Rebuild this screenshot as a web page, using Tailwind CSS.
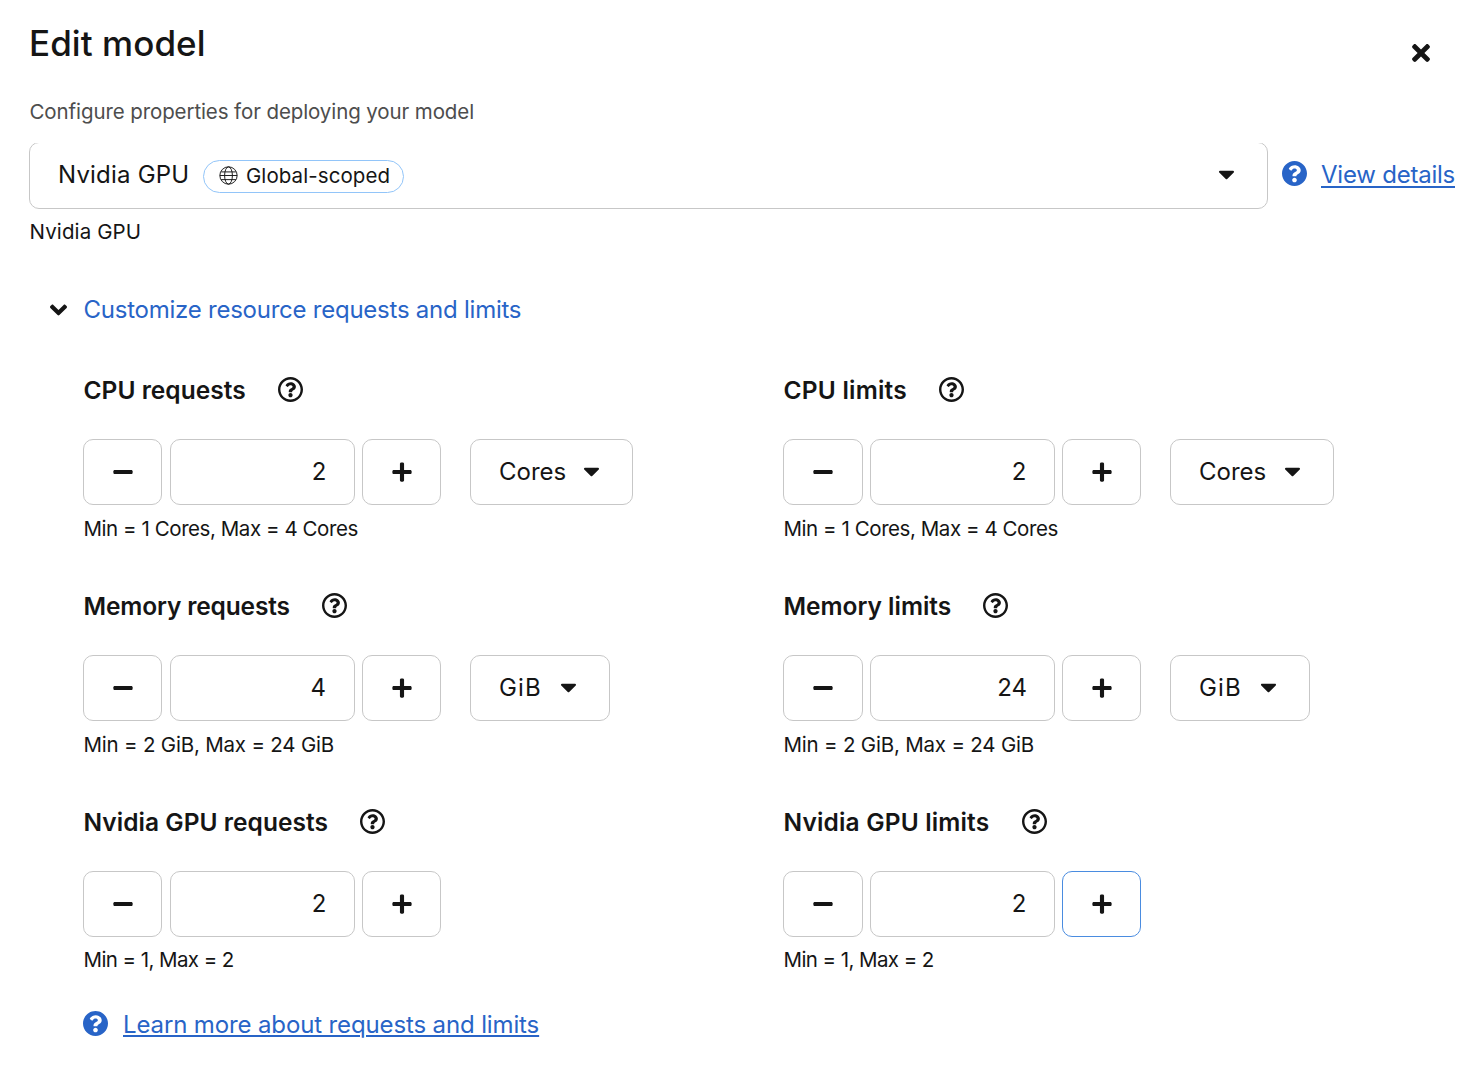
<!DOCTYPE html>
<html lang="en">
<head>
<meta charset="utf-8">
<title>Edit model</title>
<script src="https://cdn.jsdelivr.net/npm/@tailwindcss/browser@4"></script>
</head>
<body class="h-[1068px] w-[1470px] overflow-hidden bg-white font-['Inter',sans-serif] text-[24px] text-[#151515]">
<svg class="hidden" aria-hidden="true">
  <symbol id="times" viewBox="0 0 352 512"><path d="M242.72 256l100.07-100.07c12.28-12.28 12.28-32.19 0-44.48l-22.24-22.24c-12.28-12.28-32.19-12.28-44.48 0L176 189.28 75.93 89.21c-12.28-12.28-32.19-12.28-44.48 0L9.21 111.45c-12.28 12.28-12.28 32.19 0 44.48L109.28 256 9.21 356.07c-12.28 12.28-12.28 32.19 0 44.48l22.24 22.24c12.28 12.28 32.2 12.28 44.48 0L176 322.72l100.07 100.07c12.28 12.28 32.2 12.28 44.48 0l22.24-22.24c12.28-12.28 12.28-32.19 0-44.48L242.72 256z"/></symbol>
  <symbol id="angle" viewBox="0 0 320 512"><path d="M143 352.3L7 216.3c-9.4-9.4-9.4-24.6 0-33.9l22.6-22.6c9.4-9.4 24.6-9.4 33.9 0l96.4 96.4 96.4-96.4c9.4-9.4 24.6-9.4 33.9 0l22.6 22.6c9.4 9.4 9.4 24.6 0 33.9l-136 136c-9.2 9.4-24.4 9.4-33.8 0z"/></symbol>
  <symbol id="caret" viewBox="0 0 320 512"><path d="M31.3 192h257.3c17.8 0 26.7 21.5 14.1 34.1L174.1 354.8c-7.8 7.8-20.5 7.8-28.3 0L17.2 226.1C4.6 213.5 13.4 192 31.3 192z"/></symbol>
  <symbol id="minus" viewBox="0 0 448 512"><path d="M416 208H32c-17.67 0-32 14.33-32 32v32c0 17.67 14.33 32 32 32h384c17.67 0 32-14.33 32-32v-32c0-17.67-14.33-32-32-32z"/></symbol>
  <symbol id="plus" viewBox="0 0 448 512"><path d="M416 208H272V64c0-17.67-14.33-32-32-32h-32c-17.67 0-32 14.33-32 32v144H32c-17.67 0-32 14.33-32 32v32c0 17.67 14.33 32 32 32h144v144c0 17.67 14.33 32 32 32h32c17.67 0 32-14.33 32-32V304h144c17.67 0 32-14.33 32-32v-32c0-17.67-14.33-32-32-32z"/></symbol>
  <symbol id="help" viewBox="8 8 496 496"><path d="M256 8C119.043 8 8 119.083 8 256c0 136.997 111.043 248 248 248s248-111.003 248-248C504 119.083 392.957 8 256 8zm0 448c-110.532 0-200-89.431-200-200 0-110.495 89.472-200 200-200 110.491 0 200 89.471 200 200 0 110.53-89.431 200-200 200zm107.244-255.2c0 67.052-72.421 68.084-72.421 92.863V300c0 6.627-5.373 12-12 12h-45.647c-6.627 0-12-5.373-12-12v-8.659c0-35.745 27.1-50.034 47.579-61.516 17.561-9.845 28.324-16.541 28.324-29.579 0-17.246-21.999-28.693-39.784-28.693-23.189 0-33.894 10.977-48.942 29.969-4.057 5.12-11.46 6.071-16.666 2.124l-27.824-21.098c-5.107-3.872-6.251-11.066-2.644-16.363C184.846 131.491 214.94 112 261.794 112c49.071 0 101.45 38.304 101.45 88.8zM298 368c0 23.159-18.841 42-42 42s-42-18.841-42-42 18.841-42 42-42 42 18.841 42 42z"/></symbol>
  <symbol id="help-solid" viewBox="8 8 496 496"><path d="M504 256c0 136.997-111.043 248-248 248S8 392.997 8 256C8 119.083 119.043 8 256 8s248 111.083 248 248zM262.655 90c-54.497 0-89.255 22.957-116.549 63.758-3.536 5.286-2.353 12.415 2.715 16.258l34.699 26.31c5.205 3.947 12.621 3.008 16.665-2.122 17.864-22.658 30.113-35.797 57.303-35.797 20.429 0 45.698 13.148 45.698 32.958 0 14.976-12.363 22.667-32.534 33.976C247.128 238.528 216 254.941 216 296v4c0 6.627 5.373 12 12 12h56c6.627 0 12-5.373 12-12v-1.333c0-28.462 83.186-29.647 83.186-106.667 0-58.002-60.165-102-116.531-102zM256 338c-25.365 0-46 20.635-46 46 0 25.364 20.635 46 46 46s46-20.636 46-46c0-25.365-20.635-46-46-46z"/></symbol>
  <symbol id="globe" viewBox="0 0 18 18"><g fill="none" stroke="currentColor" stroke-width=".9"><circle cx="9" cy="9" r="8.2"/><ellipse cx="9" cy="9" rx="3.7" ry="8.2"/><path d="M.8 9h16.4M2 5.6h14M2 12.9h14"/></g></symbol>
</svg>

<header class="flex h-[65px] justify-between pt-[22px] pl-[29px]">
  <h1 class="h-[43px] text-[35px] leading-[43px] font-medium tracking-[0.05px]">Edit model</h1>
  <button class="mr-[40px] flex h-[61px] items-center"><svg class="h-[26px] w-[18px] fill-current"><use href="#times"/></svg></button>
</header>

<p class="mt-[33px] ml-[29.5px] h-[27px] text-[20.5px] leading-[27px] tracking-[-0.1px] text-[#4d4d4d]">Configure properties for deploying your model</p>

<div class="mt-[18px] flex h-[66px] items-center pl-[29px]">
  <div class="h-[66px] w-[1239px] overflow-hidden">
    <button class="-mt-px flex h-[67px] w-full items-center rounded-[10px] border border-[#c7c7c7] pr-[32px] pl-[28px]">
      <span class="-mt-[2px] w-[131px] text-left tracking-[0.2px] whitespace-nowrap">Nvidia GPU</span>
      <span class="mt-px ml-[14px] flex h-[33px] w-[201px] items-center rounded-full border border-[#92c5f9] pl-[15px] text-[20.5px] tracking-[0.08px]"><svg class="-mt-[2px] mr-[8px] size-[19px] shrink-0 text-[#151515]"><use href="#globe"/></svg><span>Global-scoped</span></span>
      <svg class="-mt-[4px] ml-auto h-[26px] w-[17px] fill-current"><use href="#caret"/></svg>
    </button>
  </div>
  <svg class="-mt-[5px] ml-[14px] size-[25px] fill-[#2864c7]"><use href="#help-solid"/></svg>
  <a class="-mt-[3px] ml-[14px] tracking-[-0.23px] whitespace-nowrap text-[#2864c7] underline decoration-2 underline-offset-[3px]">View details</a>
</div>
<p class="mt-[9px] ml-[29.5px] h-[27px] text-[20.5px] leading-[27px] tracking-[0.12px]">Nvidia GPU</p>

<button class="mt-[51px] ml-[49.5px] flex h-[27px] items-center leading-[27px]">
  <svg class="mr-[17px] h-[28px] w-[17px] fill-current"><use href="#angle"/></svg>
  <span class="tracking-[-0.24px] text-[#2864c7]">Customize resource requests and limits</span>
</button>

<main class="mt-[54px] ml-[83px] grid grid-cols-[700px_1fr] gap-y-[51px]">
  <section>
    <h2 class="flex h-[26px] items-center text-[24.5px] leading-[26px] font-semibold tracking-[0.02px]"><span class="w-[195px] pl-[0.5px]">CPU requests</span><svg class="-mt-[2px] size-[25px] fill-current"><use href="#help"/></svg></h2>
    <div class="mt-[36px] flex h-[66px]">
      <button class="flex w-[79px] items-center justify-center rounded-[10px] border border-[#c7c7c7]"><svg class="h-[22px] w-[20px] fill-current"><use href="#minus"/></svg></button>
      <div class="ml-[8px] flex w-[185px] items-center justify-end rounded-[10px] border border-[#c7c7c7] pr-[27.5px]">2</div>
      <button class="ml-[7px] flex w-[79px] items-center justify-center rounded-[10px] border border-[#c7c7c7]"><svg class="h-[22px] w-[20px] fill-current"><use href="#plus"/></svg></button>
      <button class="ml-[29px] flex w-[163px] items-center justify-between rounded-[10px] border border-[#c7c7c7] pr-[32px] pl-[28px]"><span>Cores</span><svg class="-mt-[2px] h-[26px] w-[17px] fill-current"><use href="#caret"/></svg></button>
    </div>
    <p class="mt-[11px] ml-[0.5px] h-[26px] text-[20.5px] leading-[26px] tracking-[-0.44px]">Min = 1 Cores, Max = 4 Cores</p>
  </section>
  <section>
    <h2 class="flex h-[26px] items-center text-[24.5px] leading-[26px] font-semibold tracking-[0.22px]"><span class="w-[156px] pl-[0.5px]">CPU limits</span><svg class="-mt-[2px] size-[25px] fill-current"><use href="#help"/></svg></h2>
    <div class="mt-[36px] flex h-[66px]">
      <button class="flex w-[80px] items-center justify-center rounded-[10px] border border-[#c7c7c7]"><svg class="h-[22px] w-[20px] fill-current"><use href="#minus"/></svg></button>
      <div class="ml-[7px] flex w-[185px] items-center justify-end rounded-[10px] border border-[#c7c7c7] pr-[27.5px]">2</div>
      <button class="ml-[7px] flex w-[79px] items-center justify-center rounded-[10px] border border-[#c7c7c7]"><svg class="h-[22px] w-[20px] fill-current"><use href="#plus"/></svg></button>
      <button class="ml-[29px] flex w-[164px] items-center justify-between rounded-[10px] border border-[#c7c7c7] pr-[32px] pl-[28px]"><span>Cores</span><svg class="-mt-[2px] h-[26px] w-[17px] fill-current"><use href="#caret"/></svg></button>
    </div>
    <p class="mt-[11px] ml-[0.5px] h-[26px] text-[20.5px] leading-[26px] tracking-[-0.44px]">Min = 1 Cores, Max = 4 Cores</p>
  </section>

  <section>
    <h2 class="flex h-[26px] items-center text-[24.5px] leading-[26px] font-semibold tracking-[-0.15px]"><span class="w-[239px] pl-[0.5px]">Memory requests</span><svg class="-mt-[2px] size-[25px] fill-current"><use href="#help"/></svg></h2>
    <div class="mt-[36px] flex h-[66px]">
      <button class="flex w-[79px] items-center justify-center rounded-[10px] border border-[#c7c7c7]"><svg class="h-[22px] w-[20px] fill-current"><use href="#minus"/></svg></button>
      <div class="ml-[8px] flex w-[185px] items-center justify-end rounded-[10px] border border-[#c7c7c7] pr-[28px]">4</div>
      <button class="ml-[7px] flex w-[79px] items-center justify-center rounded-[10px] border border-[#c7c7c7]"><svg class="h-[22px] w-[20px] fill-current"><use href="#plus"/></svg></button>
      <button class="ml-[29px] flex w-[140px] items-center justify-between rounded-[10px] border border-[#c7c7c7] pr-[32px] pl-[28px]"><span class="tracking-[1.2px]">GiB</span><svg class="-mt-[2px] h-[26px] w-[17px] fill-current"><use href="#caret"/></svg></button>
    </div>
    <p class="mt-[11px] ml-[0.5px] h-[26px] text-[20.5px] leading-[26px] tracking-[-0.2px]">Min = 2 GiB, Max = 24 GiB</p>
  </section>
  <section>
    <h2 class="flex h-[26px] items-center text-[24.5px] leading-[26px] font-semibold tracking-[-0.02px]"><span class="w-[200px] pl-[0.5px]">Memory limits</span><svg class="-mt-[2px] size-[25px] fill-current"><use href="#help"/></svg></h2>
    <div class="mt-[36px] flex h-[66px]">
      <button class="flex w-[80px] items-center justify-center rounded-[10px] border border-[#c7c7c7]"><svg class="h-[22px] w-[20px] fill-current"><use href="#minus"/></svg></button>
      <div class="ml-[7px] flex w-[185px] items-center justify-end rounded-[10px] border border-[#c7c7c7] pr-[27px]">24</div>
      <button class="ml-[7px] flex w-[79px] items-center justify-center rounded-[10px] border border-[#c7c7c7]"><svg class="h-[22px] w-[20px] fill-current"><use href="#plus"/></svg></button>
      <button class="ml-[29px] flex w-[140px] items-center justify-between rounded-[10px] border border-[#c7c7c7] pr-[32px] pl-[28px]"><span class="tracking-[1.2px]">GiB</span><svg class="-mt-[2px] h-[26px] w-[17px] fill-current"><use href="#caret"/></svg></button>
    </div>
    <p class="mt-[11px] ml-[0.5px] h-[26px] text-[20.5px] leading-[26px] tracking-[-0.2px]">Min = 2 GiB, Max = 24 GiB</p>
  </section>

  <section>
    <h2 class="flex h-[26px] items-center text-[24.5px] leading-[26px] font-semibold tracking-[0.04px]"><span class="w-[277px] pl-[0.5px]">Nvidia GPU requests</span><svg class="-mt-[2px] size-[25px] fill-current"><use href="#help"/></svg></h2>
    <div class="mt-[36px] flex h-[66px]">
      <button class="flex w-[79px] items-center justify-center rounded-[10px] border border-[#c7c7c7]"><svg class="h-[22px] w-[20px] fill-current"><use href="#minus"/></svg></button>
      <div class="ml-[8px] flex w-[185px] items-center justify-end rounded-[10px] border border-[#c7c7c7] pr-[27.5px]">2</div>
      <button class="ml-[7px] flex w-[79px] items-center justify-center rounded-[10px] border border-[#c7c7c7]"><svg class="h-[22px] w-[20px] fill-current"><use href="#plus"/></svg></button>
    </div>
    <p class="mt-[10px] ml-[0.5px] h-[26px] text-[20.5px] leading-[26px] tracking-[-0.58px]">Min = 1, Max = 2</p>
  </section>
  <section>
    <h2 class="flex h-[26px] items-center text-[24.5px] leading-[26px] font-semibold tracking-[0.16px]"><span class="w-[239px] pl-[0.5px]">Nvidia GPU limits</span><svg class="-mt-[2px] size-[25px] fill-current"><use href="#help"/></svg></h2>
    <div class="mt-[36px] flex h-[66px]">
      <button class="flex w-[80px] items-center justify-center rounded-[10px] border border-[#c7c7c7]"><svg class="h-[22px] w-[20px] fill-current"><use href="#minus"/></svg></button>
      <div class="ml-[7px] flex w-[185px] items-center justify-end rounded-[10px] border border-[#c7c7c7] pr-[27.5px]">2</div>
      <button class="ml-[7px] flex w-[79px] items-center justify-center rounded-[10px] border border-[#4a8ce0]"><svg class="h-[22px] w-[20px] fill-current"><use href="#plus"/></svg></button>
    </div>
    <p class="mt-[10px] ml-[0.5px] h-[26px] text-[20.5px] leading-[26px] tracking-[-0.58px]">Min = 1, Max = 2</p>
  </section>
</main>

<footer class="mt-[38px] ml-[83px] flex h-[26px] items-center leading-[26px]">
  <svg class="-mt-[2px] size-[25px] fill-[#2864c7]"><use href="#help-solid"/></svg>
  <a class="mt-[2px] ml-[15px] tracking-[-0.13px] text-[#2864c7] underline decoration-2 underline-offset-[2px]">Learn more about requests and limits</a>
</footer>
</body>
</html>
